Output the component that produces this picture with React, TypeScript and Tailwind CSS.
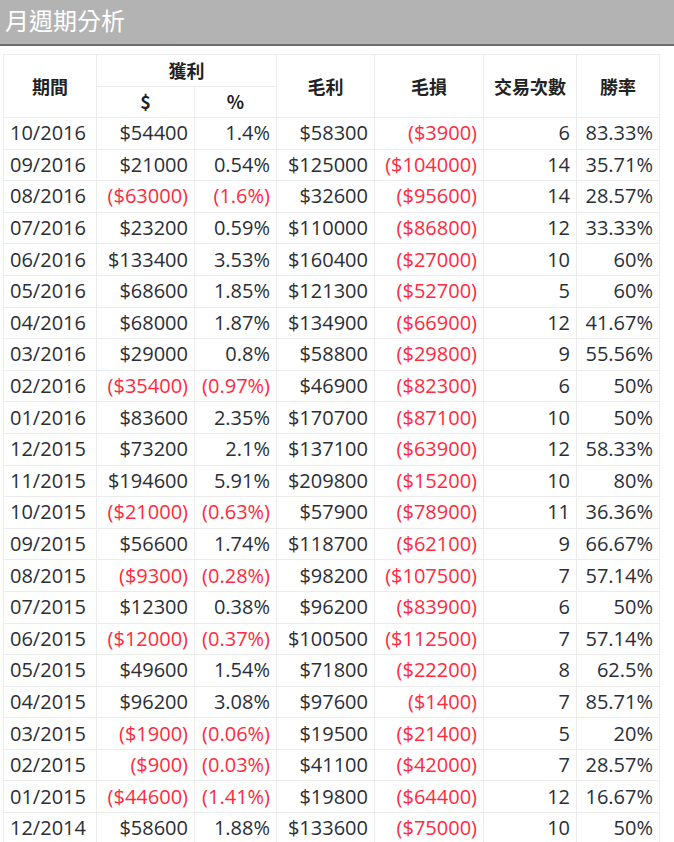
import React from "react";

type Row = [string, string, string, string, string, string, string];

const rows: Row[] = [
  ["10/2016", "$54400", "1.4%", "$58300", "($3900)", "6", "83.33%"],
  ["09/2016", "$21000", "0.54%", "$125000", "($104000)", "14", "35.71%"],
  ["08/2016", "($63000)", "(1.6%)", "$32600", "($95600)", "14", "28.57%"],
  ["07/2016", "$23200", "0.59%", "$110000", "($86800)", "12", "33.33%"],
  ["06/2016", "$133400", "3.53%", "$160400", "($27000)", "10", "60%"],
  ["05/2016", "$68600", "1.85%", "$121300", "($52700)", "5", "60%"],
  ["04/2016", "$68000", "1.87%", "$134900", "($66900)", "12", "41.67%"],
  ["03/2016", "$29000", "0.8%", "$58800", "($29800)", "9", "55.56%"],
  ["02/2016", "($35400)", "(0.97%)", "$46900", "($82300)", "6", "50%"],
  ["01/2016", "$83600", "2.35%", "$170700", "($87100)", "10", "50%"],
  ["12/2015", "$73200", "2.1%", "$137100", "($63900)", "12", "58.33%"],
  ["11/2015", "$194600", "5.91%", "$209800", "($15200)", "10", "80%"],
  ["10/2015", "($21000)", "(0.63%)", "$57900", "($78900)", "11", "36.36%"],
  ["09/2015", "$56600", "1.74%", "$118700", "($62100)", "9", "66.67%"],
  ["08/2015", "($9300)", "(0.28%)", "$98200", "($107500)", "7", "57.14%"],
  ["07/2015", "$12300", "0.38%", "$96200", "($83900)", "6", "50%"],
  ["06/2015", "($12000)", "(0.37%)", "$100500", "($112500)", "7", "57.14%"],
  ["05/2015", "$49600", "1.54%", "$71800", "($22200)", "8", "62.5%"],
  ["04/2015", "$96200", "3.08%", "$97600", "($1400)", "7", "85.71%"],
  ["03/2015", "($1900)", "(0.06%)", "$19500", "($21400)", "5", "20%"],
  ["02/2015", "($900)", "(0.03%)", "$41100", "($42000)", "7", "28.57%"],
  ["01/2015", "($44600)", "(1.41%)", "$19800", "($64400)", "12", "16.67%"],
  ["12/2014", "$58600", "1.88%", "$133600", "($75000)", "10", "50%"],
];

const cjk = { fontFamily: '"Noto Sans CJK TC", "Noto Sans", sans-serif' };
const num = { fontFamily: '"Open Sans", "Noto Sans", sans-serif' };

export default function App() {
  return (
    <div className="w-[674px] h-[842px] overflow-hidden bg-white">
      <div
        className="h-[46px] bg-[#b3b3b3] border-b-2 border-[#6e6e6e] flex items-center pl-[5px] text-white text-[24px] leading-none pb-[4px]"
        style={cjk}
      >
        月週期分析
      </div>
      <div className="pl-[3px] pt-[8px]">
        <table className="table-fixed border-collapse w-[656px]" style={num}>
          <colgroup>
            <col className="w-[93px]" />
            <col className="w-[98px]" />
            <col className="w-[82px]" />
            <col className="w-[98px]" />
            <col className="w-[109px]" />
            <col className="w-[93px]" />
            <col className="w-[83px]" />
          </colgroup>
          <thead style={cjk} className="text-[18px] font-bold text-[#222]">
            <tr className="h-[31.5px]">
              <th rowSpan={2} className="border border-[#ececec] font-bold text-center">期間</th>
              <th colSpan={2} className="border border-[#ececec] font-bold text-center">獲利</th>
              <th rowSpan={2} className="border border-[#ececec] font-bold text-center">毛利</th>
              <th rowSpan={2} className="border border-[#ececec] font-bold text-center">毛損</th>
              <th rowSpan={2} className="border border-[#ececec] font-bold text-center">交易次數</th>
              <th rowSpan={2} className="border border-[#ececec] font-bold text-center">勝率</th>
            </tr>
            <tr className="h-[31.5px]">
              <th className="border border-[#ececec] font-bold text-center">$</th>
              <th className="border border-[#ececec] font-bold text-center">%</th>
            </tr>
          </thead>
          <tbody className="text-[20px] leading-none text-[#2a2e36]">
            {rows.map((r) => (
              <tr key={r[0]} className="h-[31.6px]">
                {r.map((c, i) => {
                  const neg = c.startsWith("(");
                  return (
                    <td
                      key={i}
                      className={
                        "border border-[#ececec] whitespace-nowrap px-[6px] " +
                        (i === 0 ? "text-left " : "text-right ") +
                        (neg ? "text-[#ff2a3d]" : "")
                      }
                    >
                      {c}
                    </td>
                  );
                })}
              </tr>
            ))}
          </tbody>
        </table>
      </div>
    </div>
  );
}
